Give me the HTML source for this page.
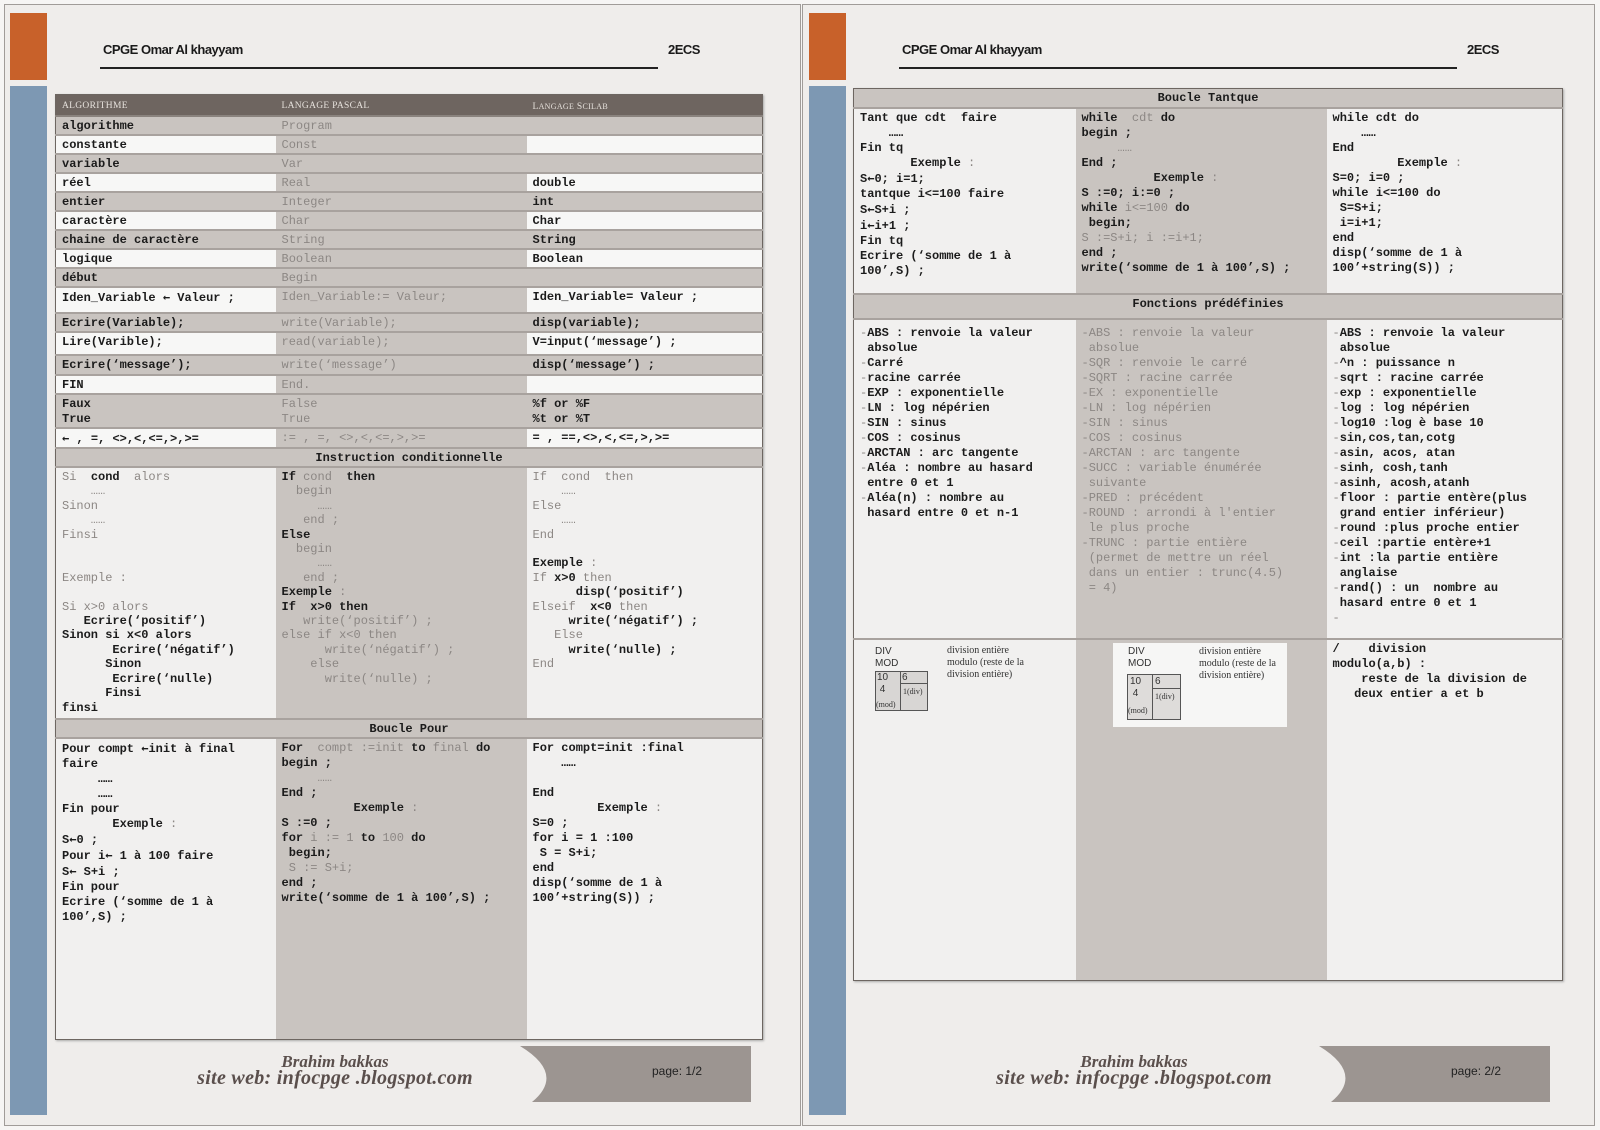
<!DOCTYPE html>
<html><head><meta charset="utf-8">
<style>
*{margin:0;padding:0;box-sizing:border-box}
body{width:1600px;height:1130px;background:#f6f5f4;position:relative;overflow:hidden;font-family:"Liberation Mono",monospace}
.page{position:absolute;top:4px;height:1122px;background:#efedeb;border:1px solid #a09c99}
.or{position:absolute;background:#c8612a}
.bl{position:absolute;background:#7d98b3}
.hd{position:absolute;font-family:"Liberation Sans",sans-serif;font-weight:bold;font-size:13px;color:#1a1a1a;letter-spacing:-0.5px}
.hl{position:absolute;height:2px;background:#222}
table{position:absolute;border-collapse:collapse;table-layout:fixed;border:1px solid #6d6661;box-shadow:1px 1px 2px #aaa}
td{vertical-align:top;padding:2px 6px 0 6px;font-size:12px;line-height:15px;font-weight:bold;color:#1b1b1b;white-space:pre;overflow:hidden;border-bottom:2px solid #a8a29e}
tr.h td{background:#6e6560;color:#e6e1dc;font-size:9.5px;font-weight:normal;font-family:"Liberation Serif",serif;padding-top:4px;letter-spacing:.3px;border-bottom:2px solid #8a837e}
tr.g td{background:#c9c4c0}
tr.w td{background:#f7f7f6}
tr.w td.c2,tr.c td.c2{background:#c9c4c0}
tr.c td{background:#f1f0ef;border-bottom:2px solid #a8a29e}
tr.s td{background:#c9c4c0;text-align:center;padding-top:2px}
tr.tight td{line-height:14.4px}
.c2{color:#8c8784;font-weight:normal}
.l{color:#8c8784;font-weight:normal}
.b{color:#1b1b1b;font-weight:bold}
.a{font-family:"DejaVu Sans Mono",monospace;font-size:12px}
.foot{position:absolute;font-family:"Liberation Serif",serif;font-style:italic;font-weight:bold;color:#5a4f4c;text-align:center}
.pg{position:absolute;font-family:"Liberation Sans",sans-serif;font-size:12px;color:#222}
.box{font-family:"Liberation Serif",serif;font-weight:normal;font-size:10px;line-height:12px;color:#333}
</style></head><body>

<!-- PAGE 1 -->
<div class="page" style="left:4px;width:797px"></div>
<div class="or" style="left:10px;top:13px;width:37px;height:67px"></div>
<div class="bl" style="left:10px;top:86px;width:37px;height:1029px"></div>
<div class="hd" style="left:103px;top:42px">CPGE Omar Al khayyam</div>
<div class="hd" style="left:668px;top:42px">2ECS</div>
<div class="hl" style="left:100px;top:67px;width:558px"></div>

<table style="left:55px;top:94px;width:707px">
<colgroup><col style="width:220px"><col style="width:251px"><col style="width:236px"></colgroup>
<tr class="h" style="height:18px"><td>ALGORITHME</td><td>LANGAGE PASCAL</td><td>L<span style="font-size:8px">ANGAGE</span> S<span style="font-size:8px">CILAB</span></td></tr>
<tr class="g" style="height:19px"><td>algorithme</td><td class="c2">Program</td><td></td></tr>
<tr class="w" style="height:19px"><td>constante</td><td class="c2">Const</td><td></td></tr>
<tr class="g" style="height:19px"><td>variable</td><td class="c2">Var</td><td></td></tr>
<tr class="w" style="height:19px"><td>réel</td><td class="c2">Real</td><td>double</td></tr>
<tr class="g" style="height:19px"><td>entier</td><td class="c2">Integer</td><td>int</td></tr>
<tr class="w" style="height:19px"><td>caractère</td><td class="c2">Char</td><td>Char</td></tr>
<tr class="g" style="height:19px"><td>chaine de caractère</td><td class="c2">String</td><td>String</td></tr>
<tr class="w" style="height:19px"><td>logique</td><td class="c2">Boolean</td><td>Boolean</td></tr>
<tr class="g" style="height:19px"><td>début</td><td class="c2">Begin</td><td></td></tr>
<tr class="w" style="height:26px"><td>Iden_Variable <span class="a">←</span> Valeur ;</td><td class="c2">Iden_Variable:= Valeur;</td><td>Iden_Variable= Valeur ;</td></tr>
<tr class="g" style="height:19px"><td>Ecrire(Variable);</td><td class="c2">write(Variable);</td><td>disp(variable);</td></tr>
<tr class="w" style="height:23px"><td>Lire(Varible);</td><td class="c2">read(variable);</td><td>V=input(‘message’) ;</td></tr>
<tr class="g" style="height:20px"><td>Ecrire(‘message’);</td><td class="c2">write(‘message’)</td><td>disp(‘message’) ;</td></tr>
<tr class="w" style="height:19px"><td>FIN</td><td class="c2">End.</td><td></td></tr>
<tr class="g" style="height:31px"><td>Faux
True</td><td class="c2">False
True</td><td>%f or %F
%t or %T</td></tr>
<tr class="w" style="height:19px"><td><span class="a">←</span> , =, &lt;&gt;,&lt;,&lt;=,&gt;,&gt;=</td><td class="c2">:= , =, &lt;&gt;,&lt;,&lt;=,&gt;,&gt;=</td><td>= , ==,&lt;&gt;,&lt;,&lt;=,&gt;,&gt;=</td></tr>
<tr class="s" style="height:19px"><td colspan="3">Instruction conditionnelle</td></tr>
<tr class="c tight" style="height:252px"><td><span class="l">Si  </span>cond<span class="l">  alors
    ……
Sinon
    ……
Finsi


Exemple :

Si x&gt;0 alors</span>
   Ecrire(‘positif’)
Sinon si x&lt;0 alors
       Ecrire(‘négatif’)
      Sinon
       Ecrire(‘nulle)
      Finsi
finsi</td><td class="c2"><span class="b">If</span> cond  <span class="b">then</span>
  begin
     ……
   end ;
<span class="b">Else</span>
  begin
     ……
   end ;
<span class="b">Exemple</span> :
<span class="b">If  x&gt;0 then</span>
   write(‘positif’) ;
else if x&lt;0 then
      write(‘négatif’) ;
    else
      write(‘nulle) ;</td><td><span class="l">If  cond  then
    ……
Else
    ……
End
</span>
Exemple <span class="l">:
If </span>x&gt;0<span class="l"> then</span>
      disp(‘positif’)
<span class="l">Elseif  </span>x&lt;0<span class="l"> then</span>
     write(‘négatif’) ;
<span class="l">   Else</span>
     write(‘nulle) ;
<span class="l">End</span></td></tr>
<tr class="s" style="height:19px"><td colspan="3">Boucle Pour</td></tr>
<tr class="c" style="height:301px"><td style="border-bottom:none">Pour compt <span class="a">←</span>init à final
faire
     ……
     ……
Fin pour
       Exemple <span class="l">:</span>
S<span class="a">←</span>0 ;
Pour i<span class="a">←</span> 1 à 100 faire
S<span class="a">←</span> S+i ;
Fin pour
Ecrire (‘somme de 1 à
100’,S) ;</td><td class="c2" style="border-bottom:none"><span class="b">For</span>  compt :=init <span class="b">to</span> final <span class="b">do
begin ;</span>
     ……
<span class="b">End ;</span>
          <span class="b">Exemple</span> :
<span class="b">S :=0 ;
for</span> i := 1 <span class="b">to</span> 100 <span class="b">do
 begin;</span>
 S := S+i;
<span class="b">end ;
write(‘somme de 1 à 100’,S) ;</span></td><td style="border-bottom:none">For compt=init :final
    ……

End
         Exemple <span class="l">:</span>
S=0 ;
for i = 1 :100
 S = S+i;
end
disp(‘somme de 1 à
100’+string(S)) ;</td></tr>
</table>

<div class="foot" style="left:130px;top:1053px;width:410px;font-size:17px;line-height:17px">Brahim bakkas<br><span style="font-size:20px;letter-spacing:0.3px">site web: infocpge .blogspot.com</span></div>

<!-- PAGE 2 -->
<div class="page" style="left:802px;width:793px"></div>
<div class="or" style="left:809px;top:13px;width:37px;height:67px"></div>
<div class="bl" style="left:809px;top:86px;width:37px;height:1029px"></div>
<div class="hd" style="left:902px;top:42px">CPGE Omar Al khayyam</div>
<div class="hd" style="left:1467px;top:42px">2ECS</div>
<div class="hl" style="left:899px;top:67px;width:558px"></div>

<table style="left:853px;top:88px;width:709px">
<colgroup><col style="width:222px"><col style="width:251px"><col style="width:236px"></colgroup>
<tr class="s" style="height:19px"><td colspan="3">Boucle Tantque</td></tr>
<tr class="c" style="height:186px"><td>Tant que cdt  faire
    ……
Fin tq
       Exemple <span class="l">:</span>
S<span class="a">←</span>0; i=1;
tantque i&lt;=100 faire
S<span class="a">←</span>S+i ;
i<span class="a">←</span>i+1 ;
Fin tq
Ecrire (‘somme de 1 à
100’,S) ;</td><td class="c2"><span class="b">while</span>  cdt <span class="b">do
begin ;</span>
     ……
<span class="b">End ;</span>
          <span class="b">Exemple</span> :
<span class="b">S :=0; i:=0 ;
while</span> i&lt;=100 <span class="b">do
 begin;</span>
S :=S+i; i :=i+1;
<span class="b">end ;
write(‘somme de 1 à 100’,S) ;</span></td><td>while cdt do
    ……
End
         Exemple <span class="l">:</span>
S=0; i=0 ;
while i&lt;=100 do
 S=S+i;
 i=i+1;
end
disp(‘somme de 1 à
100’+string(S)) ;</td></tr>
<tr class="s" style="height:25px"><td colspan="3" style="padding-top:2px">Fonctions prédéfinies</td></tr>
<tr class="c" style="height:320px"><td style="padding-top:6px"><span class="l">-</span>ABS : renvoie la valeur
 absolue
<span class="l">-</span>Carré
<span class="l">-</span>racine carrée
<span class="l">-</span>EXP : exponentielle
<span class="l">-</span>LN : log népérien
<span class="l">-</span>SIN : sinus
<span class="l">-</span>COS : cosinus
<span class="l">-</span>ARCTAN : arc tangente
<span class="l">-</span>Aléa : nombre au hasard
 entre 0 et 1
<span class="l">-</span>Aléa(n) : nombre au
 hasard entre 0 et n-1</td><td class="c2" style="padding-top:6px">-ABS : renvoie la valeur
 absolue
-SQR : renvoie le carré
-SQRT : racine carrée
-EX : exponentielle
-LN : log népérien
-SIN : sinus
-COS : cosinus
-ARCTAN : arc tangente
-SUCC : variable énumérée
 suivante
-PRED : précédent
-ROUND : arrondi à l'entier
 le plus proche
-TRUNC : partie entière
 (permet de mettre un réel
 dans un entier : trunc(4.5)
 = 4)</td><td style="padding-top:6px"><span class="l">-</span>ABS : renvoie la valeur
 absolue
<span class="l">-</span>^n : puissance n
<span class="l">-</span>sqrt : racine carrée
<span class="l">-</span>exp : exponentielle
<span class="l">-</span>log : log népérien
<span class="l">-</span>log10 :log è base 10
<span class="l">-</span>sin,cos,tan,cotg
<span class="l">-</span>asin, acos, atan
<span class="l">-</span>sinh, cosh,tanh
<span class="l">-</span>asinh, acosh,atanh
<span class="l">-</span>floor : partie entère(plus
 grand entier inférieur)
<span class="l">-</span>round :plus proche entier
<span class="l">-</span>ceil :partie entère+1
<span class="l">-</span>int :la partie entière
 anglaise
<span class="l">-</span>rand() : un  nombre au
 hasard entre 0 et 1
<span class="l">-</span></td></tr>
<tr class="c" style="height:342px"><td style="border-bottom:none;font-weight:normal;position:relative"></td><td class="c2" style="border-bottom:none;position:relative"></td><td style="border-bottom:none">/    division
modulo(a,b) :
    reste de la division de
   deux entier a et b</td></tr>
</table>

<!-- DIV/MOD boxes -->
<div class="box" style="position:absolute;left:875px;top:646px;font-family:'Liberation Sans',sans-serif">DIV<br>MOD</div>
<div class="box" style="position:absolute;left:947px;top:645px">division entière<br>modulo (reste de la<br>division entière)</div>
<div style="position:absolute;left:875px;top:671px;width:53px;height:40px;border:1px solid #555;background:#d8d6d4"></div>
<div style="position:absolute;left:900px;top:671px;width:1px;height:40px;background:#555"></div>
<div style="position:absolute;left:900px;top:683px;width:28px;height:1px;background:#555"></div>
<div class="box" style="position:absolute;left:877px;top:672px;font-family:'Liberation Sans',sans-serif;font-size:10px">10<br>&nbsp;4</div>
<div class="box" style="position:absolute;left:902px;top:672px;font-family:'Liberation Sans',sans-serif">6</div>
<div class="box" style="position:absolute;left:903px;top:686px;font-size:8px">1(div)</div>
<div class="box" style="position:absolute;left:876px;top:699px;font-size:8px">(mod)</div>

<div style="position:absolute;left:1113px;top:643px;width:174px;height:84px;background:#f6f6f5"></div>
<div class="box" style="position:absolute;left:1128px;top:646px;font-family:'Liberation Sans',sans-serif">DIV<br>MOD</div>
<div class="box" style="position:absolute;left:1199px;top:646px">division entière<br>modulo (reste de la<br>division entière)</div>
<div style="position:absolute;left:1127px;top:674px;width:54px;height:46px;border:1px solid #555;background:#dedcda"></div>
<div style="position:absolute;left:1152px;top:674px;width:1px;height:46px;background:#555"></div>
<div style="position:absolute;left:1152px;top:688px;width:29px;height:1px;background:#555"></div>
<div class="box" style="position:absolute;left:1130px;top:676px;font-family:'Liberation Sans',sans-serif">10<br>&nbsp;4</div>
<div class="box" style="position:absolute;left:1155px;top:676px;font-family:'Liberation Sans',sans-serif">6</div>
<div class="box" style="position:absolute;left:1155px;top:691px;font-size:8px">1(div)</div>
<div class="box" style="position:absolute;left:1128px;top:705px;font-size:8px">(mod)</div>

<svg style="position:absolute;left:0;top:0" width="1600" height="1130">
<path d="M520,1046 L751,1046 L751,1102 L532,1102 Q566,1074 520,1046 Z" fill="#9c9591"/>
<path d="M1319,1046 L1550,1046 L1550,1102 L1331,1102 Q1365,1074 1319,1046 Z" fill="#9c9591"/>
</svg>
<div class="pg" style="left:652px;top:1064px">page: 1/2</div>
<div class="foot" style="left:929px;top:1053px;width:410px;font-size:17px;line-height:17px">Brahim bakkas<br><span style="font-size:20px;letter-spacing:0.3px">site web: infocpge .blogspot.com</span></div>
<div class="pg" style="left:1451px;top:1064px">page: 2/2</div>
</body></html>
